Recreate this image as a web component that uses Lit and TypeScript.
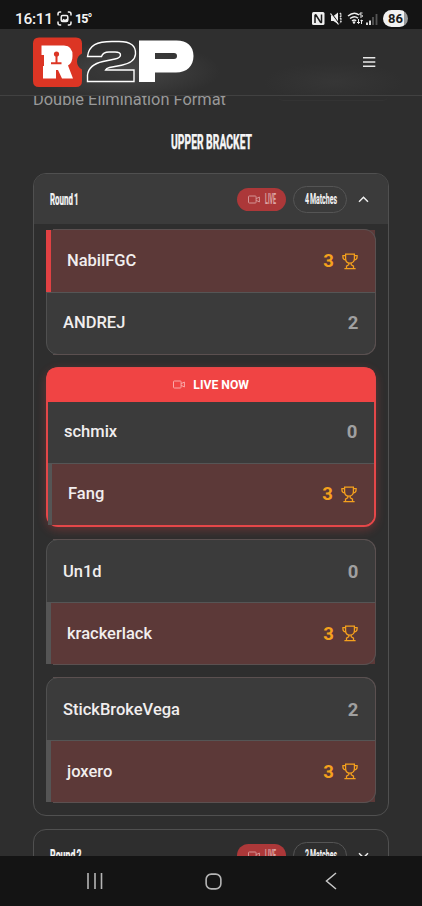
import { LitElement, html, css, svg, nothing } from "lit";
import { customElement, property } from "lit/decorators.js";

interface Side { name: string; score: number; won?: boolean; accent?: boolean }
interface Match { live?: boolean; sides: Side[] }

const MATCHES: Match[] = [
  { sides: [{ name: "NabilFGC", score: 3, won: true, accent: true }, { name: "ANDREJ", score: 2 }] },
  { live: true, sides: [{ name: "schmix", score: 0 }, { name: "Fang", score: 3, won: true }] },
  { sides: [{ name: "Un1d", score: 0 }, { name: "krackerlack", score: 3, won: true }] },
  { sides: [{ name: "StickBrokeVega", score: 2 }, { name: "joxero", score: 3, won: true }] },
];

/* Condensed heading text squeezed to a given width. */
const condensed = (text: string, width: number, size: number, color: string, weight = 800, stroke = 0.2, gap = -0.12) => html`
  <svg width=${width} height=${size} viewBox="0 0 ${width} ${size}" style="display:block;overflow:visible">
    ${svg`<text x="0" y=${size * 0.86} textLength=${width} lengthAdjust="spacingAndGlyphs" word-spacing=${size * gap}
      font-family="Roboto, sans-serif" font-weight=${weight} font-size=${size} fill=${color} stroke=${color} stroke-width=${stroke}>${text}</text>`}
  </svg>`;

const camera = html`<svg width="12" height="9" viewBox="0 0 12 9" fill="none" stroke="currentColor" stroke-width="1" style="display:block">
  <rect x=".5" y="1" width="7.6" height="7" rx=".8"/><path d="M8.2 3.7 11.4 2v5L8.2 5.3"/></svg>`;

const trophy = html`<svg width="16" height="17" viewBox="0 0 16 17" fill="none" stroke="#f5a11d" stroke-width="1.25" style="display:block">
  <path d="M3.6 1.2h8.8v4.2c0 2.8-1.8 4.7-4.4 4.7S3.6 8.2 3.6 5.400z"/>
  <path d="M3.6 2.700H.9v1.200c0 1.800 1.200 2.900 3.100 3M12.400 2.700h2.700v1.200c0 1.800-1.200 2.900-3.100 3"/>
  <path d="M6.800 10v1.700L4.500 13.200v2M9.200 10v1.700l2.300 1.500v2M2.400 15.500h11.200"/></svg>`;

@customElement("match-card")
class MatchCard extends LitElement {
  @property({ attribute: false }) match!: Match;
  static styles = css`
    :host { display: block; }
    .card { position: relative; box-sizing: border-box; width: 330.4px; height: 126px; border: 1px solid #505050; border-radius: 12px; background: #3b3b3b; display: flex; flex-direction: column; }
    .card::after { content: ""; position: absolute; inset: -1px -1px -1px 6px; border: 1px solid #5b5050; border-left: 0; border-radius: 0 12px 12px 0; pointer-events: none; }
    .card.live { height: 160px; border: 2px solid #e54749; box-shadow: 0 3px 10px rgba(239, 68, 68, .28); }
    .card.live::after { display: none; }
    .live .won { border-bottom-right-radius: 10px; }
    .banner { flex: none; height: 34px; margin: -1px -1px 0; border-radius: 8px 8px 0 0; background: #f04444; display: flex; align-items: center; justify-content: center; gap: 8px; color: #f9a9a9; }
    .banner b { color: #fff; font-size: 12.2px; font-weight: 700; line-height: 14px; }
    .row { flex: 1; box-sizing: border-box; display: flex; align-items: center; padding: 0 17px 0 16px; min-height: 0; }
    .card:not(.live) .row:first-child { padding-top: 1px; }
    .live .row { padding-right: 17px; }
    .row + .row { border-top: 1px solid #555; }
    .row.won { background: #5c3938; border-left: 4px solid #555; }
    .row.accent { margin-left: -1px; border-left: 5px solid #e14143; }
    .card:not(.live) .won:not(.accent) { margin-left: -1px; border-left-width: 5px; }
    .name { flex: 1; color: #f1eeee; font-weight: 500; font-size: 16.5px; line-height: 20px; }
    .score { color: #a0a0a0; font-weight: 700; font-size: 18.5px; line-height: 20px; }
    .won .score { color: #f5a11d; margin-right: 8.5px; }
  `;
  render() {
    const m = this.match;
    return html`<div class="card ${m.live ? "live" : ""}">
      ${m.live ? html`<div class="banner">${camera}<b>LIVE NOW</b></div>` : nothing}
      ${m.sides.map(s => html`<div class="row ${s.won ? "won" : ""} ${s.accent ? "accent" : ""}">
        <span class="name">${s.name}</span><span class="score">${s.score}</span>${s.won ? trophy : nothing}
      </div>`)}
    </div>`;
  }
}

@customElement("round-panel")
class RoundPanel extends LitElement {
  @property() label = "";
  @property() count = "";
  @property({ attribute: false }) matches: Match[] = [];
  static styles = css`
    :host { display: block; }
    .panel { box-sizing: border-box; width: 356px; border: 1px solid #505050; border-radius: 13px; overflow: hidden; }
    .open { height: 643px; }
    .head { box-sizing: border-box; height: 50px; padding: 1px 19px 0 16px; display: flex; align-items: center; }
    .open .head { background: #3b3b3b; }
    .grow { flex: 1; }
    .live { box-sizing: border-box; width: 49px; height: 23px; border-radius: 12px; background: #ac3839; color: #d59495; display: flex; align-items: center; padding-left: 11px; gap: 5px; }
    .count { box-sizing: border-box; width: 54.5px; height: 27px; border: 1px solid #555; border-radius: 14px; margin: 0 11px 0 7px; display: flex; align-items: center; padding-left: 11px; }
    .list { padding: 5px 12px 12px; display: flex; flex-direction: column; gap: 12.3px; }
  `;
  render() {
    const open = this.matches.length > 0;
    return html`<div class="panel ${open ? "open" : ""}">
      <div class="head">
        ${condensed(this.label, open ? 28.5 : 31.5, 16.5, "#f3f3f3")}
        <span class="grow"></span>
        <div class="live">${camera}${condensed("LIVE", 11, 14, "#dda5a5", 700, 0.1)}</div>
        <div class="count">${condensed(this.count, 32, 14.5, "#f3f3f3", 700, 0.1)}</div>
        <svg width="11" height="7" viewBox="0 0 11 7" fill="none" stroke="#eee" stroke-width="1.5"><path d=${open ? "M1 5.800 5.500 1.300 10 5.800" : "M1 1.200 5.500 5.700 10 1.200"}/></svg>
      </div>
      ${open ? html`<div class="list">${this.matches.map(m => html`<match-card .match=${m}></match-card>`)}</div>` : nothing}
    </div>`;
  }
}

@customElement("app-root")
class AppRoot extends LitElement {
  static styles = css`
    :host { display: flex; flex-direction: column; width: 422px; height: 906px; overflow: hidden; background: #2e2e2e; font-family: Roboto, "Liberation Sans", sans-serif; }
    svg { display: block; }
    .status { flex: none; height: 29px; background: #141414; box-sizing: border-box; padding: 8px 14px 0 15px; display: flex; align-items: center; color: #f4f4f4; }
    .time { font: 500 15.5px/20px Roboto, sans-serif; width: 42px; letter-spacing: -.3px; }
    .temp { font: 800 12.5px/16px Roboto, sans-serif; letter-spacing: -.9px; margin-left: 3px; }
    .grow { flex: 1; }
    .battery { width: 25px; height: 17px; border-radius: 9px; background: linear-gradient(90deg, #f2f2f2 86%, #999 86%); color: #1c1c1c; font: 700 13px/17px Roboto, sans-serif; text-align: center; margin-left: 4px; }
    .bar { flex: none; box-sizing: border-box; height: 67px; border-bottom: 1px solid #414141; padding: 0 46px 0 32px; display: flex; align-items: center; justify-content: space-between;
      background: radial-gradient(ellipse 95px 30px at 125px 42px, #484848, rgba(47,47,47,0) 100%), radial-gradient(ellipse 70px 20px at 334px 53px, #363636, rgba(47,47,47,0)), #2f2f2f; }
    .page { flex: 1; min-height: 0; overflow: hidden; display: flex; flex-direction: column; align-items: center; }
    .format { flex: none; align-self: stretch; height: 18px; margin: -6px 0 0 33px; font-size: 16.4px; line-height: 20px; color: #999; }
    .ghost { align-self: flex-end; flex: none; width: 110px; height: 5px; margin: -12px 34px 6px 0; border-bottom: 1px solid #333; border-radius: 0 0 6px 6px; box-sizing: border-box; }
    .title { flex: none; height: 21px; margin: 24px 0 20.5px; }
    .rounds { display: flex; flex-direction: column; gap: 13px; }
    .nav { flex: none; height: 50px; background: #141414; box-sizing: border-box; padding: 0 85px 0 86px; display: flex; align-items: center; }
    .nav .home { margin: 0 auto 0 100.5px; }
  `;
  render() {
    return html`
      <div class="status">
        <span class="time">16:11</span>
        <svg width="15" height="15" viewBox="0 0 15 15" fill="none" stroke="#f2f2f2" stroke-width="1.5"><path d="M1 4.500V3q0-2 2-2h1.200M10.800 1H12q2 0 2 2v1.500M14 10.500V12q0 2-2 2h-1.200M4.200 14H3q-2 0-2-2v-1.500"/><rect x="4.2" y="4.5" width="6.6" height="6" rx="1.5"/><path d="m4.500 9.800 2-2 1.500 1 2.500-1.600v3z" fill="#f2f2f2" stroke="none"/></svg>
        <span class="temp">15°</span>
        <span class="grow"></span>
        <svg width="68" height="15" viewBox="0 0 68 15" fill="none">
          <rect x="1" y="1" width="12.5" height="13" rx="1.5" fill="#eee"/><path d="M4 12V4.500q.2-1 1-.5l4.500 7.200q1 .8 1-.2V3.500" stroke="#1a1a1a" stroke-width="1.5"/>
          <path d="M20 5h2.500L27 1.500v11.500L22.500 10H20z" fill="#eee"/><path d="m19.500 1 8.500 11.500" stroke="#141414" stroke-width="1.2"/><path d="m19.500 2.500 8 11" stroke="#eee" stroke-width="1.2"/><path d="M29 2l1.500 2L29 6.500 30.500 9 29 12.500" stroke="#ddd" stroke-width="1.5" stroke-dasharray="2 1"/>
          <path d="M37 5q6-5 11-1M39 7.500q4.500-3.500 8-.3M41 10q2.500-2 4 0" stroke="#eee" stroke-width="1.5"/><circle cx="43" cy="11.500" r="1.2" fill="#eee"/>
          <path d="M51.500 2H49v2q2.500-.5 2.500 1T49 6M47.500 8v4.500m-1.500-1.500 1.500 1.500 1.500-1.500M50.500 13V9m-1 1 1-1 1.500 1" stroke="#eee"/>
          <path d="M56 14v-2.500M59 14V9.500" stroke="#eee" stroke-width="1.8"/><path d="M62 14V6M65.500 14V3" stroke="#555" stroke-width="1.8"/>
        </svg>
        <span class="battery">86</span>
      </div>
      <div class="bar">
        <svg width="164" height="52" viewBox="0 0 164 52" aria-label="R2P">
          <path d="M7 1.500h37q6 0 6 6v10q-5 2.500-5 8t5 8v11.500q0 6-6 6H7q-6 0-6-6V7.500q0-6 6-6z" fill="#dc3524"/>
          <path fill="#fff" d="M9.500 9.500H32Q41 10 40.500 20q0 7-4.500 9.500l5 13H30l-4-8.500h-2v8.500H11V30h1V19H9.500z"/>
          <circle cx="24.500" cy="18" r="2.6" fill="#dc3524"/><path d="M24.500 19v8M19 27.200h10.500" stroke="#dc3524" stroke-width="2" fill="none"/>
          <path d="M55.500 20.500C57 9 65 5.500 80 5.500h7C99 5.500 104 10 103.500 18c-.5 6.500-5 9.500-14 11.200l-12 2.300c-2.500.6-3.500 1.400-4 2.500h28.500v11.500H55.500V39c1-7.500 6-11.500 15.500-13.500l12-2.500c4-.9 5.500-2 5.500-4s-2-3-5.500-3h-6c-4.500 0-6.500 1.500-7.500 4.500z" fill="#303030" fill-opacity=".6" stroke="#fff" stroke-width="1.4"/>
          <path fill="#fff" fill-rule="evenodd" d="M107 4.500h37.500C155 4.500 161.500 10 161.500 20S155 36.500 144 36.500h-21V46h-16zM123 17v6h19q3 0 3-3t-3-3z"/>
        </svg>
        <svg width="14" height="12" viewBox="0 0 14 12" stroke="#e8e8e8" stroke-width="1.4"><path d="M1 1.700h12.300M1 6h12.300M1 10.300h12.300"/></svg>
      </div>
      <div class="page">
        <div class="format">Double Elimination Format</div>
        <div class="ghost"></div>
        <div class="title">${condensed("UPPER BRACKET", 81, 20.5, "#f5f5f5", 800, 0.25, -0.02)}</div>
        <div class="rounds">
          <round-panel label="Round 1" count="4 Matches" .matches=${MATCHES}></round-panel>
          <round-panel label="Round 2" count="2 Matches"></round-panel>
        </div>
      </div>
      <div class="nav">
        <svg width="18" height="18" viewBox="0 0 18 18" stroke="#b5b5b5" stroke-width="1.6"><path d="M2 1v16M9 1v16M15.500 1v16"/></svg>
        <svg class="home" width="17" height="17" viewBox="0 0 18 18" fill="none" stroke="#b5b5b5" stroke-width="1.7"><rect x="1.2" y="1.2" width="15.6" height="15.6" rx="5.5"/></svg>
        <svg width="12" height="18" viewBox="0 0 12 18" fill="none" stroke="#c8c8c8" stroke-width="1.5"><path d="M11 1 1.500 9l9.500 8"/></svg>
      </div>`;
  }
}
